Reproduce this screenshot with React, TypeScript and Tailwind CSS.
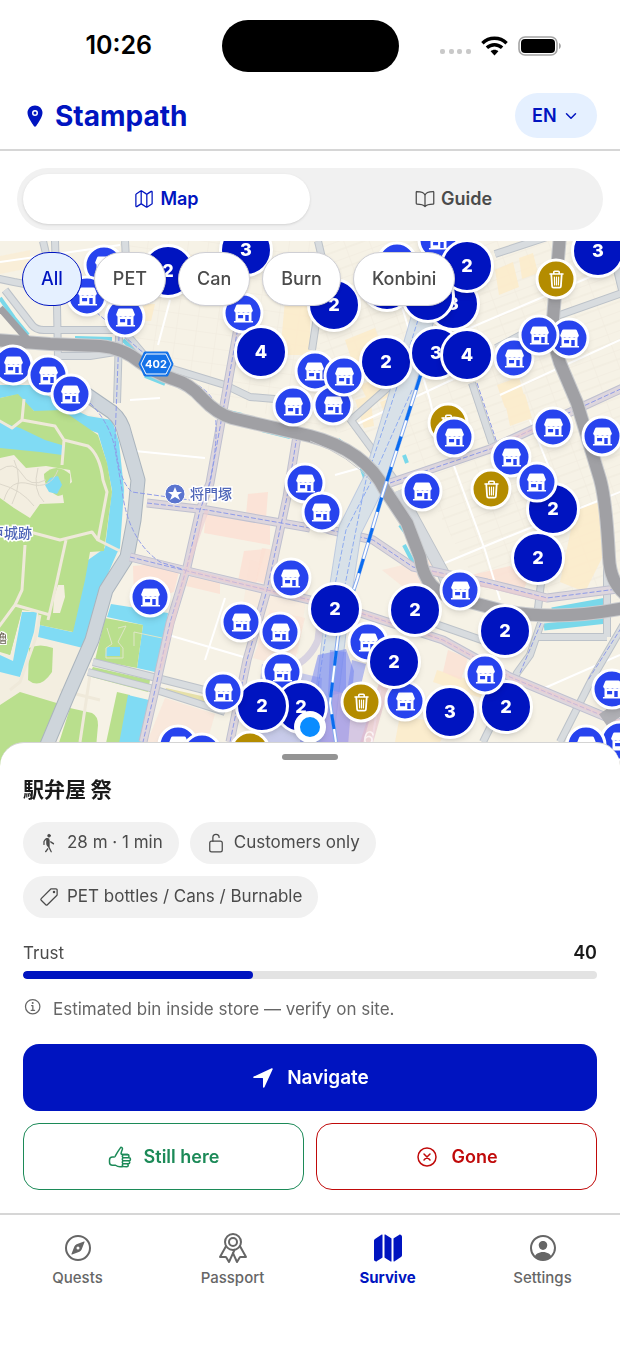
import React, { useState } from "react";
import {
  IoBookOutline,
  IoChevronDown,
  IoCloseCircleOutline,
  IoCompassOutline,
  IoInformationCircleOutline,
  IoLocation,
  IoLockOpenOutline,
  IoMap,
  IoMapOutline,
  IoNavigate,
  IoPersonCircleOutline,
  IoPricetagOutline,
  IoRibbonOutline,
  IoThumbsUpOutline,
  IoWalk,
} from "react-icons/io5";

// The map canvas is drawn in these units
const MAP_W = 620;
const MAP_H = 530;
const MAP_TOP = 241;

type Pin = { kind: "store" | "trash" | "cluster"; x: number; y: number; n?: number };

const store = (x: number, y: number): Pin => ({ kind: "store", x, y });
const trash = (x: number, y: number): Pin => ({ kind: "trash", x, y });
const cluster = (x: number, y: number, n?: number): Pin => ({ kind: "cluster", x, y, n });

// Later pins lie over earlier ones
const pins: Pin[] = [
  store(104, 265),
  store(87, 296),
  store(125, 317),
  cluster(168, 271, 2),
  cluster(246, 250, 3),
  store(243, 313),
  cluster(261, 352, 4),
  store(13, 365),
  store(48, 375),
  store(71, 394),
  store(397, 262),
  store(438, 240),
  cluster(334, 305, 2),
  cluster(387, 285),
  cluster(453, 304, 3),
  cluster(428, 296),
  cluster(467, 266, 2),
  cluster(598, 251, 3),
  trash(556, 279),
  store(569, 338),
  store(514, 358),
  store(539, 335),
  cluster(386, 362, 2),
  cluster(436, 353, 3),
  cluster(467, 355, 4),
  store(315, 371),
  store(293, 406),
  store(333, 405),
  store(344, 376),
  trash(448, 423),
  store(454, 437),
  store(553, 427),
  store(602, 436),
  store(511, 457),
  trash(491, 489),
  cluster(553, 509, 2),
  store(537, 482),
  cluster(538, 558, 2),
  store(422, 491),
  store(305, 483),
  store(322, 512),
  store(150, 597),
  store(291, 578),
  store(241, 622),
  store(280, 632),
  cluster(335, 609, 2),
  cluster(415, 610, 2),
  store(460, 590),
  cluster(505, 631, 2),
  store(368, 642),
  store(405, 701),
  cluster(394, 662, 2),
  cluster(506, 707, 2),
  store(485, 674),
  cluster(450, 712, 3),
  trash(361, 702),
  store(282, 672),
  cluster(301, 707, 2),
  cluster(262, 706, 2),
  store(223, 692),
  store(612, 689),
  store(620, 741),
  store(586, 745),
  store(178, 745),
  store(202, 753),
  trash(250, 751),
];

const majorRoads = [
  "M-5 278 L14 282 L57 290",
  "M5 290 L32 325 Q36 330 44 330 L60 330 L123 330 L150 362 L225 385 L250 397 L310 402",
  "M55 241 L57 306 L58 358",
  "M43 241 L48 262",
  "M125 241 L126 260",
  "M58 356 L90 356 L115 352",
  "M119 336 L117 403",
  "M350 421 L393 383",
  "M350 419 L397 483",
  "M472 383 L492 443",
  "M495 254 L550 236",
  "M496 348 L557 316 L625 292",
  "M610 241 L622 290",
  "M318 310 L312 350",
  "M318 241 L322 258",
  "M537 637 L607 637",
  "M537 617 L541 583",
  "M541 623 L530 655 L517 673 L483 742",
  "M625 622 L593 677 L560 742",
  "M607 557 L607 637",
  "M410 615 L510 650",
  "M93 662 L153 677 L220 694",
  "M88 672 L150 688 L225 712",
];

const railRoads = [
  "M245 310 L237 333 L210 483 L200 510 L187 567 L170 623 L155 690 L143 742",
  "M147 503 L207 510 L310 528",
  "M130 557 L183 570 L267 590 L310 600 L360 613 L443 640 L510 677 L625 725",
  "M297 436 L287 497 L267 590 L247 660 L230 742",
  "M310 523 L330 530 L373 540 L413 567 L487 583 L547 598 L625 588",
  "M390 483 L490 449 L625 387",
];

const minorRoads = [
  "M0 262 L120 245",
  "M170 300 L158 345",
  "M135 451 L205 458",
  "M165 634 L247 658",
  "M225 598 L205 660",
  "M355 425 L460 376",
  "M400 300 L430 400 L440 445",
  "M440 565 L500 540 L625 490",
  "M450 455 L485 550 L500 600",
  "M500 395 L620 340",
  "M430 345 L625 262",
  "M335 475 L360 468",
  "M530 420 L570 520",
  "M130 400 L160 398",
  "M380 690 L372 742",
  "M540 690 L620 655",
];

const highways = [
  "M-5 340 L50 344 L100 346 Q123 348 140 362 Q155 373 173 379 Q190 384 202 398 Q217 414 232 418 L310 436 Q365 450 385 490 L407 523 L420 557 Q425 592 455 598 L500 610 Q555 622 625 608",
  "M560 235 L553 319 Q552 340 560 363 L577 403 L600 479 Q606 500 609 557 Q610 582 625 594",
];

function MapCanvas() {
  return (
    <svg
      viewBox={`0 ${MAP_TOP} ${MAP_W} ${MAP_H}`}
      preserveAspectRatio="none"
      className="block h-full w-full"
      role="img"
      aria-label="Street map"
    >
      <defs>
        <pattern id="blocks" width="24" height="18" patternUnits="userSpaceOnUse" patternTransform="rotate(-20)">
          <path d="M0 0H24M0 0V18M0 9H24" fill="none" stroke="#efeadd" strokeWidth="1" />
        </pattern>
        <pattern id="blocksLeft" width="20" height="15" patternUnits="userSpaceOnUse" patternTransform="rotate(8)">
          <path d="M0 0H20M0 0V15" fill="none" stroke="#efeadd" strokeWidth="1" />
        </pattern>
      </defs>
      <rect x="0" y={MAP_TOP} width={MAP_W} height={MAP_H} fill="#f6f2e6" />
      <path d="M120 241H320V430L220 400L130 340Z" fill="url(#blocksLeft)" />
      <path d="M320 241H620V600L480 590L400 440L320 430Z" fill="url(#blocks)" />

      {/* Built-up blocks */}
      <g fill="#fdebc9" opacity="0.8">
        <path d="M495 270l18-8 6 25-20 8zM519 258l14-5 5 20-16 6zM497 385l22-8 6 22-20 9zM505 402l20-8 7 24-22 8z" />
        <path d="M120 304h35l-4 17h-30zM285 300h25v55h-30zM345 340l30-12 8 22-30 14zM380 402l22-8 6 14-22 10z" />
        <path d="M575 510l25-8 5 50-20 40-25-10z" />
        <path d="M437 670l80 24-6 14-78-26zM400 715l50 10-10 17h-45zM360 385l30-12 8 20-28 12zM355 400l15-4 4 30-10 2z" />
        <path d="M150 255h60v20h-60zM0 256l30-6v18l-30 6z" opacity="0.6" />
      </g>
      <g fill="#fbe0d3">
        <path d="M206 514l64 11v20l-66-12zM248 494l20-2-2 26-20-3zM244 551l22-2-10 35-18-3zM133 566l22-2 24 8-5 20-40 12z" opacity="0.85" />
        <path d="M262 548l18 3-10 34-14-4zM190 575l30 7v12l-34-8zM450 580l60-14 18 12-5 14-70-8zM448 650l20 8-7 22-18-8z" opacity="0.8" />
        <path d="M165 698l50 16-8 28h-60zM270 610l35 8-12 50-40-10zM382 570l50-12 5 30-30 2z" opacity="0.55" />
        <path d="M250 560l60 14-12 80-60-16z" opacity="0.3" />
      </g>

      {/* Castle grounds and moat */}
      <path d="M0 385L31 385L60 400L88 414L112 420L119 442L125 490L119 553L101 592L83 648L60 700L45 771H0Z" fill="#f3eee0" />
      <path d="M0 385L31 385L60 403L88 416L112 420L119 442L124 490L120 548L117 553L100 592L83 648L38 637L40 625L72 632L88 560L105 548L112 490L106 460L98 433L35 412L16 395L0 398Z" fill="#80dbf4" />
      <path d="M0 398L18 394L34 411L62 410L98 435L107 463L112 492L104 551L90 552L85 580L73 632L40 625L38 612L22 610L10 655L0 650Z" fill="#b9df8d" />
      <path d="M0 422L20 428L45 440L65 446L62 455L40 452L0 448Z" fill="#80dbf4" />
      <path d="M0 458L14 455L26 468L46 466L70 470L72 482L62 490L64 503L40 504L30 518L14 508L0 498Z" fill="#f3eee0" />
      <path d="M44 474Q56 462 70 474Q72 494 58 496Q44 490 44 474Z" fill="#b9df8d" />
      <path d="M50 478l8-2 4 9-5 9-8-2-4-7z" fill="#80dbf4" />
      <path d="M0 540L18 552L22 610L10 655L0 652Z" fill="#b9df8d" />
      <path d="M22 612H37L34 632L20 677L0 672V655L13 661Z" fill="#80dbf4" />
      <path d="M29 648Q40 643 53 648L52 672Q40 690 28 680Z" fill="#b9df8d" />
      <path d="M0 705L20 692L60 704L48 742L40 771H0Z" fill="#b9df8d" />
      <path d="M70 708L92 713Q98 716 98 725L94 771H50Z" fill="#b9df8d" />
      <path d="M58 585h6l1 12-5 16h-7l1-16z" fill="#f3eee0" />
      <path d="M111 604L168 613L165 642L155 672L137 668L143 625L107 617Z" fill="#80dbf4" />
      <path d="M105 618L143 625L137 668L95 660Z" fill="#b9df8d" />
      <path d="M107 647h13v9h-15z" fill="#80dbf4" />
      <path d="M93 667L150 680L148 692L88 676Z" fill="#b9df8d" />
      <path d="M117 692L130 695L118 771H100Z" fill="#b9df8d" />
      <path d="M128 695L149 700L140 771H114Z" fill="#80dbf4" />
      <path d="M166 688l40 9-2 9-40-11z" fill="#e6e0a8" />
      <g fill="none" stroke="#efe9da" strokeWidth="3" strokeLinejoin="round">
        <path d="M-2 420L12 428L22 420L24 399M22 420L55 426L64 440L62 465M64 440L88 446Q100 455 103 480L107 492L98 540L120 551" />
        <path d="M30 532L60 540L92 532L98 540M66 540L55 590L48 620M25 545L22 590L15 605L50 615M15 605L-2 628M40 615L35 640L20 682L10 690M100 700L60 690M90 675L80 742" />
      </g>
      <g fill="none" stroke="#dcd7ca" strokeWidth="1">
        <path d="M0 470Q14 460 22 474T46 480M4 500Q10 478 30 484T58 470M0 484Q22 490 34 506M14 460Q24 480 12 504M38 468Q32 490 44 502" />
      </g>
      <path d="M107 628l5 16-6 4v10h17v-10l-5-6 8-16-8 2M134 632l28 6M134 632v14" fill="none" stroke="#dfe6c8" strokeWidth="1" />

      {/* Canals beside the expressway */}
      <g fill="none" stroke="#79d8ea" strokeWidth="4">
        <path d="M0 298L14 318L28 335M75 338L112 339M123 340L140 356M145 376L165 384M228 412l14 3M262 430L290 437M338 440Q360 455 366 482M400 525L406 533M404 545L416 568M404 455l3 8" />
        <path d="M552 611L607 601M544 627L607 620" strokeWidth="7" />
      </g>

      {/* Streets */}
      <g fill="none" strokeLinejoin="round">
        {minorRoads.map((d) => (
          <path key={d} d={d} stroke="#ffffff" strokeWidth="2" />
        ))}
        <g stroke="#bcc2c9" strokeWidth="8">
          {majorRoads.map((d) => (
            <path key={d} d={d} />
          ))}
        </g>
        <g stroke="#d8dcdf" strokeWidth="6">
          {majorRoads.map((d) => (
            <path key={d} d={d} />
          ))}
        </g>
        <path d="M400 490L407 507L443 573L450 590" stroke="#bcc2c9" strokeWidth="13" />
        <path d="M400 490L407 507L443 573L450 590" stroke="#d6dade" strokeWidth="11" />
        <path d="M80 390L112 412Q122 420 125 435L138 480L134 520L127 557L106 590L92 640L67 697L36 771" stroke="#aab4bd" strokeWidth="15" />
        <path d="M80 390L112 412Q122 420 125 435L138 480L134 520L127 557L106 590L92 640L67 697L36 771" stroke="#ced5db" strokeWidth="13" />
        <g stroke="#bfc0d0" strokeWidth="9">
          {railRoads.map((d) => (
            <path key={d} d={d} />
          ))}
        </g>
        <g stroke="#ddd6dd" strokeWidth="7">
          {railRoads.map((d) => (
            <path key={d} d={d} />
          ))}
        </g>
        <g stroke="#8f9be8" strokeWidth="1" strokeDasharray="5 2">
          {railRoads.map((d) => (
            <path key={d} d={d} />
          ))}
          <path d="M96 312L140 350L175 375Q205 385 213 400Q222 440 205 500" />
          <path d="M119 336L115 440Q118 480 132 492L190 500M90 403Q112 425 116 455L122 490Q128 540 160 562L185 570" />
          <path d="M477 383L497 443M625 622L588 680M541 623L520 673" />
        </g>
        <g stroke="#eccbd0" strokeWidth="4" opacity="0.6">
          <path d="M183 570L267 590L360 613L443 640L510 677L620 722M207 510L187 567L160 670M490 449L545 424M430 572L547 600" />
        </g>

        {/* Railway corridor */}
        <path d="M425 310L402 390L375 480L350 530L336 620L318 771" stroke="#aebfdd" strokeWidth="24" opacity="0.8" />
        <path d="M425 310L402 390L375 480L350 530L336 620L318 771" stroke="#d8e1e8" strokeWidth="22" />
        <path d="M412 390L372 480L346 530L328 620L310 742M418 320L396 390L366 480L354 540L340 610" stroke="#8facf0" strokeWidth="1" strokeDasharray="5 2" />
        <path d="M290 668Q310 660 318 640Q322 620 312 600" stroke="#b9b3dc" strokeWidth="7" opacity="0.5" />

        {highways.map((d) => (
          <path key={d} d={d} stroke="#c9cbce" strokeWidth="14" />
        ))}
        {highways.map((d) => (
          <path key={d} d={d} stroke="#a0a0a4" strokeWidth="12" />
        ))}
        <path d="M0 308L28 340" stroke="#a0a0a4" strokeWidth="7" />
        <path d="M603 720L625 705" stroke="#b0b0b5" strokeWidth="14" />
        <path d="M310 441Q350 456 372 482" stroke="#c9cace" strokeWidth="1" />
      </g>

      {/* Station */}
      <g fill="#7384f2">
        <path d="M318 655l28-6 8 22-8 100h-50l10-70z" opacity="0.55" />
        <path d="M330 650l16 2v40l-18 4zM352 660l14 4-6 25-12-4z" opacity="0.5" />
        <path d="M262 664l60 14-6 93h-66z" opacity="0.35" />
        <path d="M330 690l45 10-20 71h-40z" fill="#b59de0" opacity="0.5" />
        <path d="M380 680l10 3-25 88h-14z" fill="#e3b5c6" opacity="0.5" />
      </g>
      <text x="362" y="743" fontSize="18" fill="#ffffff" opacity="0.7" transform="rotate(12 362 743)">6</text>
      <path d="M430 345L415 393L383 493L357 580L338 637L330 703L336 742" fill="none" stroke="#84a9ee" strokeWidth="4" />
      <path d="M430 345L415 393L383 493L357 580L338 637L330 703L336 742" fill="none" stroke="#ffffff" strokeWidth="2" />
      <path d="M430 345L415 393L383 493L357 580L338 637L330 703L336 742" fill="none" stroke="#0a6cf0" strokeWidth="3" strokeDasharray="15 17" />

      {/* Route shield */}
      <path d="M145 353H167L172 364L167 375H145L140 364Z" fill="#1372e8" stroke="#1372e8" strokeWidth="3" strokeLinejoin="round" />
      <path d="M146 354H166L171 364L166 374H146L141 364Z" fill="#1372e8" stroke="#ffffff" strokeWidth="1" />
      <text x="156" y="368" textAnchor="middle" fontSize="11" fontWeight="700" fill="#ffffff">402</text>

      {/* Landmarks */}
      <circle cx="175" cy="494" r="10" fill="#5b75cf" stroke="#ffffff" strokeWidth="1" />
      <path d="M175 487l2 5 5 0-4 3 2 5-5-3-5 3 2-5-4-3 5 0z" fill="#ffffff" />
      <g fill="#4f66b8" fontSize="14" fontWeight="500" stroke="#ffffff" strokeWidth="3" paintOrder="stroke">
        <text x="190" y="499">将門塚</text>
        <text x="32" y="538" textAnchor="end">江戸城跡</text>
      </g>
      <text x="7" y="643" textAnchor="end" fontSize="12" fill="#6b6355" stroke="#ffffff" strokeWidth="2" paintOrder="stroke">櫓</text>
    </svg>
  );
}

function StoreIcon() {
  return (
    <svg viewBox="0 0 20 20" className="size-5" fill="currentColor" aria-hidden="true">
      <path d="M4 1H16Q17 1 17.400 2L19.400 7Q19 9.400 17 9.400Q15.600 9.400 14.700 8.400Q13.800 9.400 12.400 9.400Q11 9.400 10 8.400Q9 9.400 7.600 9.400Q6.200 9.400 5.300 8.400Q4.400 9.400 3 9.400Q1 9.400 .6 7L2.600 2Q3 1 4 1Z" />
      <path
        fillRule="evenodd"
        d="M2 9H18V17.400H19.600V19H.4V17.400H2ZM4.600 11.400V14.800H9.600V11.400ZM11.800 11.400V17.400H15.200V11.400Z"
      />
    </svg>
  );
}

function BinIcon() {
  return (
    <svg viewBox="0 0 16 20" className="h-5 w-4" fill="none" stroke="currentColor" strokeLinecap="round" strokeLinejoin="round" aria-hidden="true">
      <path d="M1.500 4.500H14.500M5.300 4.200V2.600Q5.300 1.700 6.200 1.700H9.800Q10.700 1.700 10.700 2.600V4.200" strokeWidth="1.600" />
      <path d="M2.800 5L3.600 16.800Q3.700 18.200 5 18.200H11Q12.300 18.200 12.400 16.800L13.200 5" strokeWidth="1.800" />
      <path d="M5.900 7.500L6.100 15.500M8 7.500V15.500M10.100 7.500L9.900 15.500" strokeWidth="1.200" />
    </svg>
  );
}

function MapPin({ pin }: { pin: Pin }) {
  const at = {
    left: `${(pin.x / MAP_W) * 100}%`,
    top: `${((pin.y - MAP_TOP) / MAP_H) * 100}%`,
  };
  const base =
    "absolute flex -translate-x-1/2 -translate-y-1/2 items-center justify-center rounded-full border-white text-white shadow-md";

  if (pin.kind === "cluster") {
    return (
      <button
        type="button"
        aria-label="Group of bins"
        style={at}
        className={`${base} size-[54px] border-3 bg-[#0014c0] text-lg font-extrabold`}
      >
        {pin.n}
      </button>
    );
  }
  if (pin.kind === "trash") {
    return (
      <button type="button" aria-label="Trash bin" style={at} className={`${base} size-[41px] border-3 bg-[#b48c00]`}>
        <BinIcon />
      </button>
    );
  }
  return (
    <button type="button" aria-label="Store" style={at} className={`${base} size-[41px] border-3 bg-[#2743ee]`}>
      <StoreIcon />
    </button>
  );
}

function StatusBar() {
  return (
    <div className="grid grid-cols-[1fr_177px_1fr] items-center pt-5">
      <time className="pl-4 text-center text-[25px] font-semibold text-black">10:26</time>
      <div className="h-[52px] rounded-full bg-black" />
      <div className="flex items-center justify-center gap-2.5 pr-4">
        <svg viewBox="0 0 31 22" className="h-[22px] w-[31px]" aria-hidden="true">
          <g fill="#c9c9c9">
            <rect x="0" y="14" width="5" height="5" rx="2" />
            <rect x="9" y="14" width="5" height="5" rx="2" />
            <rect x="17" y="14" width="5" height="5" rx="2" />
            <rect x="26" y="14" width="5" height="5" rx="2" />
          </g>
        </svg>
        <svg viewBox="0 0 27 20" className="h-5 w-[27px]" aria-hidden="true">
          <g fill="none" stroke="#000000" strokeWidth="3.4">
            <path d="M1.4 7.2C8.2.6 18.8.6 25.6 7.2" />
            <path d="M5.9 11.8C10.2 7.7 16.8 7.7 21.1 11.8" />
          </g>
          <path d="M9.6 15.3C11.8 13.3 15.2 13.3 17.4 15.3L13.5 19.4Z" fill="#000000" />
        </svg>
        <svg viewBox="0 0 44 20" className="h-5 w-11" aria-hidden="true">
          <rect x="1" y="1" width="38" height="18" rx="6" fill="none" stroke="#a3a3a3" strokeWidth="1.6" />
          <rect x="3" y="3" width="34" height="14" rx="4" fill="#000000" />
          <path d="M41 7C43.4 8 43.4 12 41 13Z" fill="#a3a3a3" />
        </svg>
      </div>
    </div>
  );
}

function Header() {
  return (
    <header className="flex items-center justify-between border-b-2 border-[#d6d6d6] px-[23px] pt-[21px] pb-[11px]">
      <h1 className="flex items-center gap-2 text-[28px] leading-9 font-bold text-[#0014c0]">
        <IoLocation className="size-6" />
        Stampath
      </h1>
      <label className="relative flex items-center text-[#0014c0]">
        <span className="absolute size-0 overflow-hidden" aria-hidden="true" />
        <select
          aria-label="Language"
          className="h-[45px] appearance-none rounded-full bg-[#e5f0ff] pr-10 pl-[17px] text-lg font-semibold"
        >
          <option>EN</option>
        </select>
        <IoChevronDown className="pointer-events-none absolute right-[18px] size-4" />
      </label>
    </header>
  );
}

const filters = ["All", "PET", "Can", "Burn", "Konbini"];

function FilterChips() {
  const [active, setActive] = useState("All");
  return (
    <div className="absolute inset-x-0 top-[11px] flex gap-3 px-[22px]">
      {filters.map((name) => (
        <button
          key={name}
          type="button"
          aria-pressed={active === name}
          onClick={() => setActive(name)}
          className={
            active === name
              ? "h-[54px] rounded-full border border-[#0014c0] bg-[#e5f0ff] px-[18px] text-lg font-medium text-[#0014c0]"
              : "h-[54px] rounded-full border border-[#cfcfd4] bg-white px-[18px] text-lg font-medium text-[#4b4b4b] shadow-sm"
          }
        >
          {name}
        </button>
      ))}
    </div>
  );
}

function Tag({ icon, children }: { icon: React.ReactNode; children: React.ReactNode }) {
  return (
    <li className="flex h-[42px] items-center gap-2 rounded-full bg-[#f1f1f1] px-4 text-[17px] text-[#4b4b4b]">
      {icon}
      {children}
    </li>
  );
}

function PlaceSheet() {
  const trust = 40;
  return (
    <section className="relative -mt-[29px] rounded-t-3xl border-t border-[#d4d4d4] bg-white px-[23px] pt-[11px] pb-[23px]">
      <div className="mx-auto h-1.5 w-14 rounded-full bg-[#949494]" />
      <h2 className="mt-3 font-['Noto_Sans_CJK_JP',sans-serif] text-[21px] leading-8 font-bold text-[#1a1a1a]">
        駅弁屋 祭
      </h2>
      <ul className="mt-[18px] flex flex-wrap gap-x-[11px] gap-y-3">
        <Tag icon={<IoWalk className="size-5" />}>28 m · 1 min</Tag>
        <Tag icon={<IoLockOpenOutline className="size-5" />}>Customers only</Tag>
        <Tag icon={<IoPricetagOutline className="size-5" />}>PET bottles / Cans / Burnable</Tag>
      </ul>
      <div className="mt-[23px] flex items-center justify-between leading-6">
        <span id="trust" className="text-[17px] leading-6 text-[#4b4b4b]">Trust</span>
        <span className="text-lg leading-6 font-semibold text-[#1a1a1a]">{trust}</span>
      </div>
      <div
        role="progressbar"
        aria-labelledby="trust"
        aria-valuenow={trust}
        aria-valuemin={0}
        aria-valuemax={100}
        className="mt-1.5 h-2 overflow-hidden rounded-full bg-[#e3e3e3]"
      >
        <div className="h-full rounded-full bg-[#0014c0]" style={{ width: `${trust}%` }} />
      </div>
      <p className="mt-[18px] flex gap-2.5 text-[17px] leading-6 text-[#666666]">
        <IoInformationCircleOutline className="size-5" />
        Estimated bin inside store — verify on site.
      </p>
      <div className="mt-[23px] grid grid-cols-2 gap-3 text-lg font-semibold">
        <button
          type="button"
          className="col-span-2 flex h-[67px] items-center justify-center gap-3 rounded-2xl bg-[#0014c0] text-[19px] text-white"
        >
          <IoNavigate className="size-6" />
          Navigate
        </button>
        <button
          type="button"
          className="flex h-[67px] items-center justify-center gap-3 rounded-2xl border border-[#1c8a58] text-[#1c8a58]"
        >
          <IoThumbsUpOutline className="size-6" />
          Still here
        </button>
        <button
          type="button"
          className="flex h-[67px] items-center justify-center gap-3 rounded-2xl border border-[#c00a0a] text-[#c00a0a]"
        >
          <IoCloseCircleOutline className="size-6" />
          Gone
        </button>
      </div>
    </section>
  );
}

const tabs = [
  { name: "Quests", Icon: IoCompassOutline },
  { name: "Passport", Icon: IoRibbonOutline },
  { name: "Survive", Icon: IoMap },
  { name: "Settings", Icon: IoPersonCircleOutline },
];

function TabBar() {
  return (
    <nav className="grid grid-cols-4 border-t-2 border-[#d6d6d6] bg-white pt-[17px] pb-14">
      {tabs.map(({ name, Icon }) => (
        <a
          key={name}
          href={`#${name.toLowerCase()}`}
          aria-current={name === "Survive" ? "page" : undefined}
          className={
            name === "Survive"
              ? "flex flex-col items-center gap-1 text-[15px] leading-5 font-bold text-[#0014c0]"
              : "flex flex-col items-center gap-1 text-[15px] leading-5 font-medium text-[#666666]"
          }
        >
          <Icon className="size-8" />
          {name}
        </a>
      ))}
    </nav>
  );
}

export default function App() {
  return (
    <div className="min-h-screen bg-white font-['Inter','Noto_Sans_CJK_JP',sans-serif]">
      <StatusBar />
      <Header />

      <div className="px-[17px] pt-[17px] pb-[11px]">
        <div className="grid grid-cols-2 rounded-full bg-[#f1f1f1] p-1.5 text-lg font-semibold">
          <button
            type="button"
            className="flex h-[50px] items-center justify-center gap-1.5 rounded-full bg-white text-[#0014c0] shadow-sm"
          >
            <IoMapOutline className="size-5" />
            Map
          </button>
          <button type="button" className="flex h-[50px] items-center justify-center gap-1.5 rounded-full text-[#4b4b4b]">
            <IoBookOutline className="size-5" />
            Guide
          </button>
        </div>
      </div>

      <main>
        <div className="relative h-[530px] overflow-hidden">
          <MapCanvas />
          {pins.map((pin) => (
            <MapPin key={`${pin.x}-${pin.y}`} pin={pin} />
          ))}
          {/* Current position */}
          <span className="absolute top-[486px] left-1/2 size-8 -translate-x-1/2 -translate-y-1/2 rounded-full border-6 border-white bg-[#0a8cff] shadow-md" />
          <FilterChips />
        </div>
        <PlaceSheet />
      </main>
      <TabBar />
    </div>
  );
}
